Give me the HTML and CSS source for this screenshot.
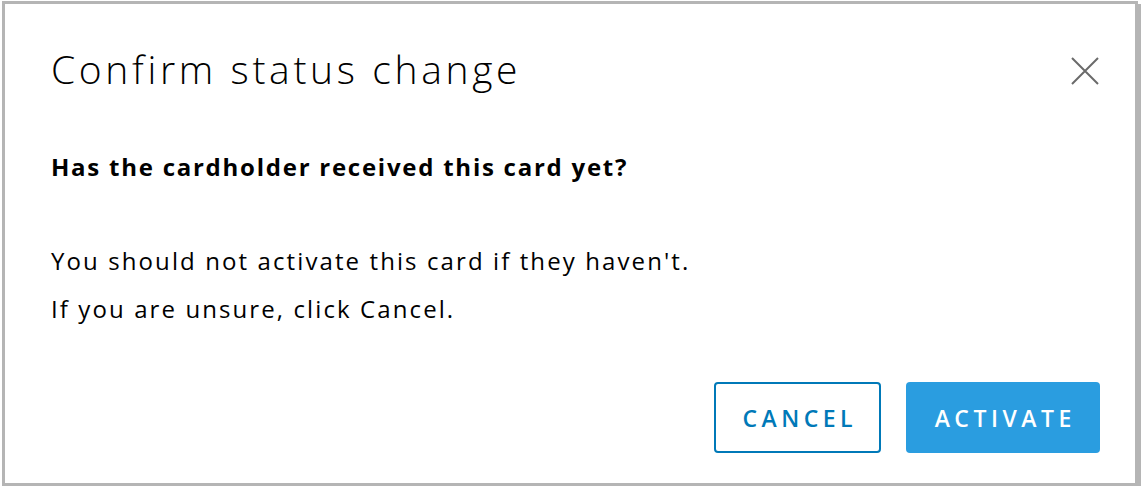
FILE: index.html
```html
<!DOCTYPE html>
<html>
<head>
<meta charset="utf-8">
<link rel="stylesheet" href="styles.css">
</head>
<body>
<div class="modal">
  <div class="modal-header">
    <h3 class="modal-title">Confirm status change</h3>
    <button class="close" aria-label="Close">
      <svg width="30" height="30" viewBox="0 0 30 30"><path d="M2 2 L28 28 M28 2 L2 28" stroke="#6a6a6a" stroke-width="2" fill="none"/></svg>
    </button>
  </div>
  <div class="modal-body">
    <p class="question">Has the cardholder received this card yet?</p>
    <p class="line">You should not activate this card if they haven't.</p>
    <p class="line">If you are unsure, click Cancel.</p>
  </div>
  <div class="modal-footer">
    <button class="btn btn-outline">CANCEL</button>
    <button class="btn btn-primary">ACTIVATE</button>
  </div>
</div>
</body>
</html>
```
FILE: styles.css
```css
html, body {
  margin: 0;
  padding: 0;
  background: #ffffff;
}
body {
  padding: 1px 0 0 2px;
  font-family: "Open Sans", "DejaVu Sans", sans-serif;
  color: #000;
}
.modal {
  box-sizing: border-box;
  width: 1136px;
  height: 485px;
  border: 3px solid #b5b5b5;
  box-shadow: 3px 3px 0 #b5b5b5;
  background: #fff;
  display: flex;
  flex-direction: column;
  padding: 0 35px 30px 46px;
}
.modal-header {
  display: flex;
  justify-content: space-between;
  align-items: flex-start;
  padding-top: 37px;
}
.modal-title {
  margin: 0;
  font-weight: 300;
  font-size: 39px;
  line-height: 56px;
  letter-spacing: 3.65px;
}
.close {
  border: 0;
  background: none;
  padding: 0;
  margin: 15px 0 0 0;
  width: 30px;
  height: 30px;
  cursor: pointer;
}
.close svg { display: block; }
.modal-body {
  flex: 1;
  padding-top: 54px;
}
.question {
  margin: 0 0 54px 0;
  font-weight: 700;
  font-size: 24px;
  line-height: 32px;
  letter-spacing: 1.75px;
}
.line {
  margin: 0;
  font-size: 24px;
  line-height: 48px;
  letter-spacing: 2.1px;
}
.modal-footer {
  display: flex;
  justify-content: flex-end;
  gap: 25px;
}
.btn {
  box-sizing: border-box;
  height: 71px;
  border-radius: 4px;
  font-family: "Open Sans", "DejaVu Sans", sans-serif;
  font-weight: 600;
  font-size: 23px;
  letter-spacing: 4.5px;
  text-indent: 4.5px;
  cursor: pointer;
}
.btn-outline {
  width: 167px;
  background: #fff;
  color: #0079b8;
  border: 2px solid #0079b8;
}
.btn-primary {
  width: 194px;
  background: #2a9de0;
  color: #fff;
  border: 0;
}
```
